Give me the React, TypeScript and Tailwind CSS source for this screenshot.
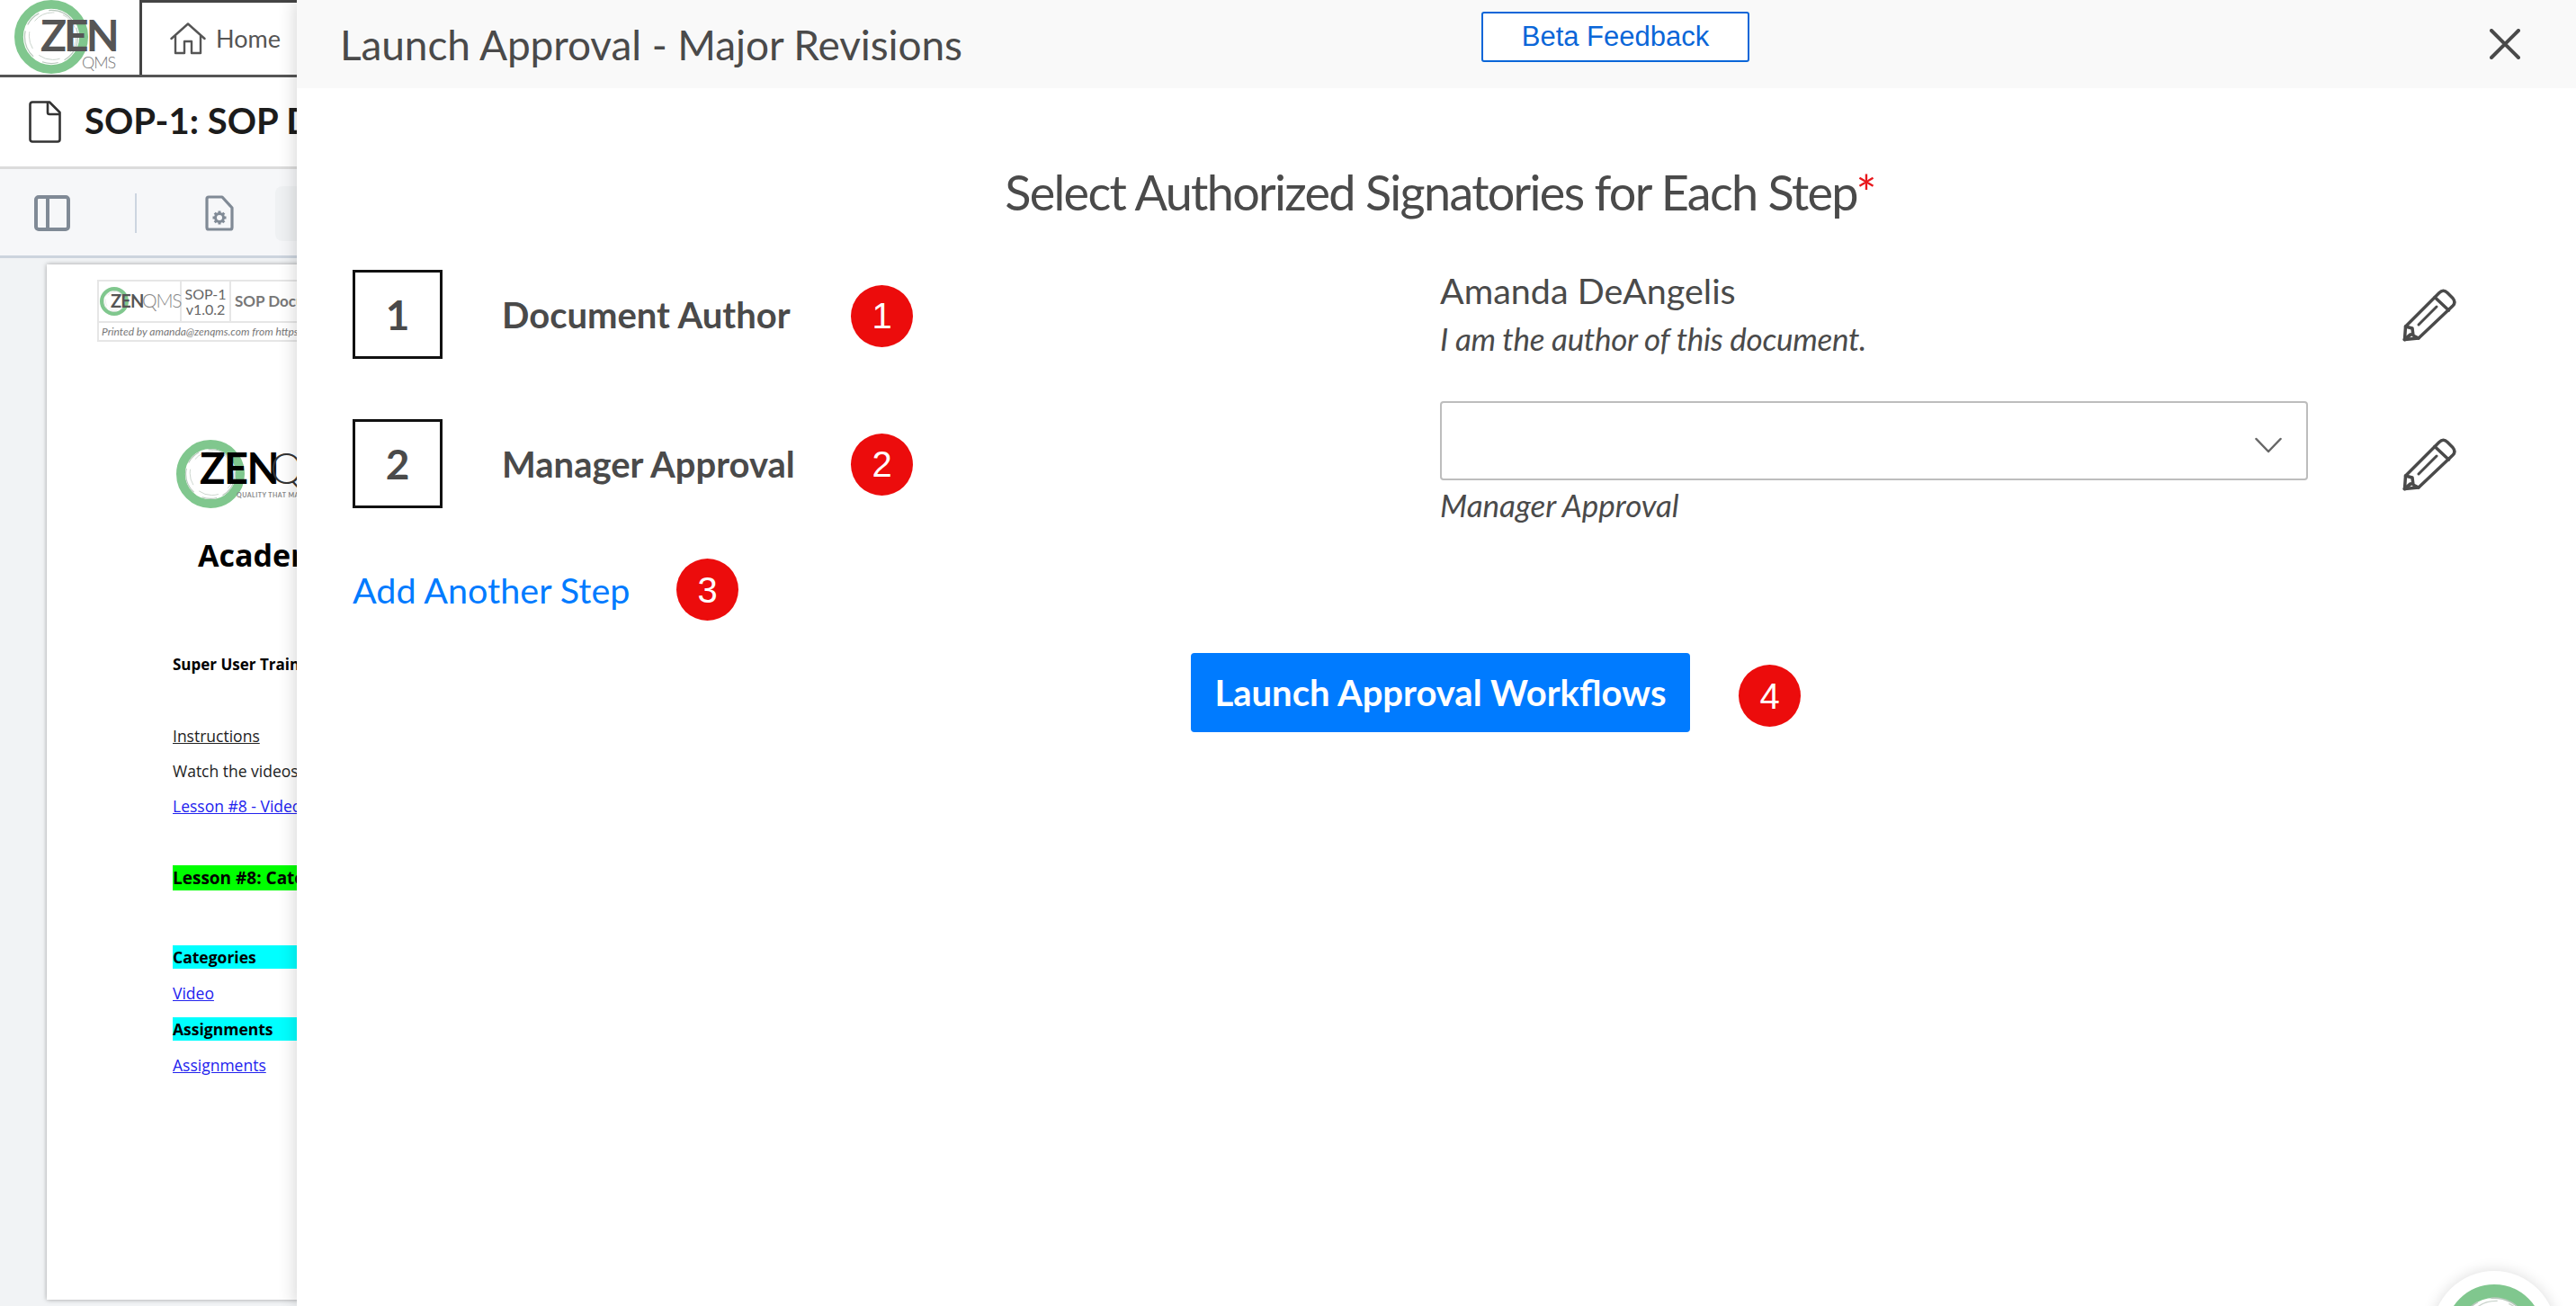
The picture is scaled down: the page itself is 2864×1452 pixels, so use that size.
import React from "react";

function Ring({ size, band = 11 }: { size: number; band?: number }) {
  return (
    <svg width={size} height={size} viewBox="0 0 100 100" className="block shrink-0">
      <circle cx="50" cy="50" r={50 - band / 2} fill="none" stroke="#80c78e" strokeWidth={band} />
      <circle cx="50" cy="50" r="36" fill="none" stroke="#b9c9bd" strokeWidth="1.5" strokeDasharray="38 9 22 14" />
      <circle cx="52" cy="49" r="32" fill="none" stroke="#c9d3cb" strokeWidth="1.2" strokeDasharray="24 16 30 12" />
    </svg>
  );
}

function Badge({ n }: { n: number }) {
  return (
    <div className="flex h-[69px] w-[69px] shrink-0 items-center justify-center rounded-full bg-[#ec0c0c] font-['Liberation_Sans',sans-serif] text-[40px] leading-none text-white">
      {n}
    </div>
  );
}

function PencilIcon() {
  return (
    <svg width="60" height="60" viewBox="0 0 60 60" fill="none" stroke="#4a4a4a" strokeWidth="3.500" strokeLinejoin="round" strokeLinecap="round" className="block shrink-0">
      <path d="M2.500 57.500 3.500 43 41 5.500c3-3 6-3 9 0l6 6c2.500 3 2.500 6 0 8.500L18 56z" />
      <path d="M36 10.500 51.500 25" />
      <path d="M18 41 38 21" strokeWidth="3" />
      <path d="M3.500 43 11 45l1 8 6 3" />
      <path d="M2.500 57.500 9 52" strokeWidth="4" />
    </svg>
  );
}

export default function App() {
  return (
    <div className="relative h-[1452px] w-[2864px] overflow-hidden bg-white font-['Lato',sans-serif] text-[#4a4a4a]">
      {/* Background application */}
      <div className="flex h-full flex-col">
        <div className="flex h-[86px] border-b-[3px] border-[#555]">
          <div className="relative h-full w-[155px] shrink-0">
            <div className="absolute left-[16px] top-0"><Ring size={82} band={12} /></div>
            <span className="absolute left-[45px] top-[19px] text-[48px] font-bold leading-[40px] tracking-[-3px] text-[#555]">ZEN</span>
            <span className="absolute left-[91px] top-[60px] text-[18px] font-light leading-[18px] tracking-[-1px] text-[#777]">QMS</span>
          </div>
          <div className="flex flex-1 items-center gap-[11px] border-l-[3px] border-t-[3px] border-[#444] pl-[31px]">
            <svg width="40" height="36" viewBox="0 0 40 36" fill="none" stroke="#555" strokeWidth="2.400" strokeLinejoin="round" strokeLinecap="round" className="shrink-0">
              <path d="M1.500 18 20 1.500 38.500 18" />
              <path d="M6 15v19h10V21h8v13h10V15" />
            </svg>
            <span className="text-[27px] text-[#555]">Home</span>
          </div>
        </div>
        <div className="flex h-[102px] items-center gap-[26px] border-b-[3px] border-[#dcdcdc] pb-[1px] pl-[32px]">
          <svg width="36" height="47" viewBox="0 0 36 47" fill="none" stroke="#333" strokeWidth="2.600" strokeLinejoin="round" className="shrink-0">
            <path d="M4 1.500h19L34.500 13v30a2.500 2.500 0 0 1-2.500 2.500H4A2.500 2.500 0 0 1 1.500 43V4A2.500 2.500 0 0 1 4 1.500z" />
            <path d="M21 1.500V13a2 2 0 0 0 2 2h11.500" />
          </svg>
          <span className="mb-[3px] whitespace-nowrap text-[40px] font-bold text-[#1c1c1c]">SOP-1: SOP Document</span>
        </div>
        <div className="flex h-[99px] items-center border-b-[3px] border-[#ccd4de] bg-[#f6f7f9] pl-[38px] pt-[2px]">
          <svg width="40" height="40" viewBox="0 0 40 40" fill="none" stroke="#808a96" strokeWidth="4" className="shrink-0">
            <rect x="2" y="2" width="36" height="36" rx="3" />
            <path d="M15 2v36" />
          </svg>
          <div className="ml-[72px] h-[44px] w-[2px] bg-[#ccd5e0]" />
          <svg width="32" height="40" viewBox="0 0 32 40" fill="none" stroke="#808a96" strokeWidth="3.200" strokeLinejoin="round" className="ml-[76px] shrink-0">
            <path d="M4 2h15l11 12v22a2 2 0 0 1-2 2H4a2 2 0 0 1-2-2V4a2 2 0 0 1 2-2z" />
            <circle cx="16" cy="25" r="4.500" strokeWidth="3" />
            <path d="M16 17.500v3M16 29.500v3M8.500 25h3M20.500 25h3M10.700 19.700l2.100 2.100M19.200 28.200l2.100 2.100M21.300 19.700l-2.100 2.100M12.800 28.200l-2.100 2.100" strokeWidth="3" />
          </svg>
          <div className="ml-[46px] h-[61px] w-[120px] shrink-0 rounded-[8px] bg-[#eff1f3]" />
        </div>
        <div className="flex-1 bg-[#f1f3f5] pl-[52px] pt-[7px]">
          <div className="h-[1151px] w-[1000px] bg-white pl-[56px] pt-[17px] shadow-[0_0_5px_rgba(0,0,0,0.35)]">
            {/* Printed header */}
            <div className="w-[700px] border-2 border-[#e6e6e6] text-[#666]">
              <div className="flex h-[46px] border-b-2 border-[#e6e6e6]">
                <div className="relative flex w-[92px] items-center border-r-2 border-[#e6e6e6]">
                  <div className="ml-[1px]"><Ring size={32} band={13} /></div>
                  <span className="absolute left-[13px] top-[9px] text-[20px] font-bold leading-[24px] tracking-[-0.8px] text-[#555]">ZEN</span>
                  <span className="absolute left-[48px] top-[9px] text-[21px] font-light leading-[24px] tracking-[-1.2px] text-[#888]">QMS</span>
                </div>
                <div className="flex w-[55px] flex-col items-center justify-center border-r-2 border-[#e6e6e6] text-[16px] leading-[17px]">
                  <span>SOP-1</span>
                  <span>v1.0.2</span>
                </div>
                <div className="flex items-center whitespace-nowrap pl-[4px] text-[17px] font-bold text-[#777]">SOP Document</div>
              </div>
              <div className="flex h-[19px] items-center whitespace-nowrap pl-[3px] text-[12px] italic text-[#777]">
                Printed by amanda@zenqms.com from https://app.zenqms.com
              </div>
            </div>
            {/* Cover logo */}
            <div className="relative ml-[88px] mt-[109px] h-[76px]">
              <div className="absolute left-0 top-0"><Ring size={76} band={13} /></div>
              <span className="absolute left-[26px] top-[6px] text-[47px] font-bold leading-[50px] tracking-[-1.5px] text-black">ZEN</span>
              <span className="absolute left-[104px] top-[6px] text-[47px] font-light leading-[50px] text-[#333]">QMS</span>
              <span className="absolute left-[67px] top-[56px] whitespace-nowrap text-[7px] font-bold tracking-[0.5px] text-[#888]">QUALITY THAT MATTERS</span>
            </div>
            <div className="ml-[112px] mt-[30px] whitespace-nowrap font-['Open_Sans',sans-serif] text-[34px] font-bold leading-[44px] text-black">Academy</div>
            <div className="ml-[84px] mt-[89px] flex flex-col font-['Open_Sans',sans-serif] text-[17.5px] leading-[22px] text-[#222]">
              <span className="whitespace-nowrap text-[17px] font-bold text-black">Super User Training</span>
              <span className="mt-[57px] self-start underline">Instructions</span>
              <span className="mt-[17px] whitespace-nowrap">Watch the videos below</span>
              <span className="mt-[17px] self-start whitespace-nowrap text-[#2222ee] underline">Lesson #8 - Videos</span>
              <span className="mt-[55px] flex h-[28px] w-[500px] items-center whitespace-nowrap bg-[#00ff00] text-[19px] font-bold text-black">Lesson #8: Categories</span>
              <span className="mt-[61px] flex h-[26px] w-[500px] items-center bg-[#00ffff] font-bold text-black">Categories</span>
              <span className="mt-[16px] self-start text-[#2222ee] underline">Video</span>
              <span className="mt-[16px] flex h-[26px] w-[500px] items-center bg-[#00ffff] font-bold text-black">Assignments</span>
              <span className="mt-[16px] self-start text-[#2222ee] underline">Assignments</span>
            </div>
          </div>
        </div>
      </div>

      {/* Drawer over the application */}
      <div className="absolute bottom-0 left-[330px] right-0 top-0 flex flex-col bg-white shadow-[-2px_0_18px_rgba(0,0,0,0.16)]">
        <div className="relative flex h-[98px] shrink-0 items-center bg-[#f9f9f9] pl-[48px] pr-[62px]">
          <h1 className="mt-[2px] text-[46px] leading-[52px] tracking-[-0.1px] text-[#4a4a4a]">Launch Approval - Major Revisions</h1>
          <button className="absolute left-[1317px] top-[13px] flex h-[56px] w-[298px] items-center justify-center rounded-[3px] border-2 border-[#0a66d8] bg-white font-['Liberation_Sans',sans-serif] text-[31px] text-[#0a66d8]">
            Beta Feedback
          </button>
          <svg width="34" height="34" viewBox="0 0 34 34" stroke="#4a4a4a" strokeWidth="4" strokeLinecap="round" className="ml-auto">
            <path d="M2 2l30 30M32 2L2 32" />
          </svg>
        </div>
        <h2 className="mt-[84px] pl-[8px] text-center text-[54px] leading-[64px] tracking-[-1.7px] text-[#4a4a4a]">
          Select Authorized Signatories for Each Step<span className="text-[#e8161b]">*</span>
        </h2>
        <div className="flex flex-1 flex-col pl-[62px] pr-[133px]">
          <div className="mt-[54px] grid grid-cols-[1209px_965px_1fr]">
            <div className="flex h-[99px] items-center">
              <div className="flex h-[99px] w-[100px] shrink-0 items-center justify-center border-[3px] border-[#111] text-[46px] font-bold">1</div>
              <span className="ml-[66px] w-[388px] whitespace-nowrap text-[40px] font-bold">Document Author</span>
              <div className="mt-[3px]"><Badge n={1} /></div>
            </div>
            <div className="flex h-[99px] flex-col">
              <span className="-mt-[1px] text-[39.5px] leading-[48px]">Amanda DeAngelis</span>
              <span className="mt-[6px] whitespace-nowrap text-[35px] italic leading-[46px] tracking-[-0.3px]">I am the author of this document.</span>
            </div>
            <div className="flex h-[99px] items-center justify-end"><PencilIcon /></div>
          </div>
          <div className="mt-[67px] grid grid-cols-[1209px_965px_1fr]">
            <div className="flex h-[99px] items-center">
              <div className="flex h-[99px] w-[100px] shrink-0 items-center justify-center border-[3px] border-[#111] text-[46px] font-bold">2</div>
              <span className="ml-[66px] w-[388px] whitespace-nowrap text-[40px] font-bold">Manager Approval</span>
              <div className="mt-[1px]"><Badge n={2} /></div>
            </div>
            <div className="-mt-[20px] flex flex-col">
              <div className="flex h-[88px] items-center justify-end rounded-[4px] border-2 border-[#bdbdbd] bg-white pr-[27px]">
                <svg width="30" height="18" viewBox="0 0 30 18" fill="none" stroke="#666" strokeWidth="2.500" strokeLinecap="round" strokeLinejoin="round" className="mt-[10px]">
                  <path d="M1.500 2 15 16 28.500 2" />
                </svg>
              </div>
              <span className="mt-[4px] text-[35px] italic leading-[46px]">Manager Approval</span>
            </div>
            <div className="flex h-[99px] items-center justify-end"><PencilIcon /></div>
          </div>
          <div className="mt-[37px] flex h-[69px] items-center">
            <span className="w-[360px] whitespace-nowrap text-[39.5px] text-[#007bff]">Add Another Step</span>
            <Badge n={3} />
          </div>
          <div className="mt-[36px] flex">
            <button className="ml-[932px] h-[88px] w-[555px] rounded-[4px] bg-[#007bff] text-[40px] font-bold text-white">Launch Approval Workflows</button>
            <div className="ml-[54px] mt-[13px]"><Badge n={4} /></div>
          </div>
        </div>
      </div>

      {/* Floating help launcher */}
      <div className="absolute left-[2704px] top-[1413px] flex h-[138px] w-[138px] items-center justify-center rounded-full bg-white shadow-[0_0_16px_rgba(0,0,0,0.14)]">
        <Ring size={108} band={14} />
      </div>
    </div>
  );
}
